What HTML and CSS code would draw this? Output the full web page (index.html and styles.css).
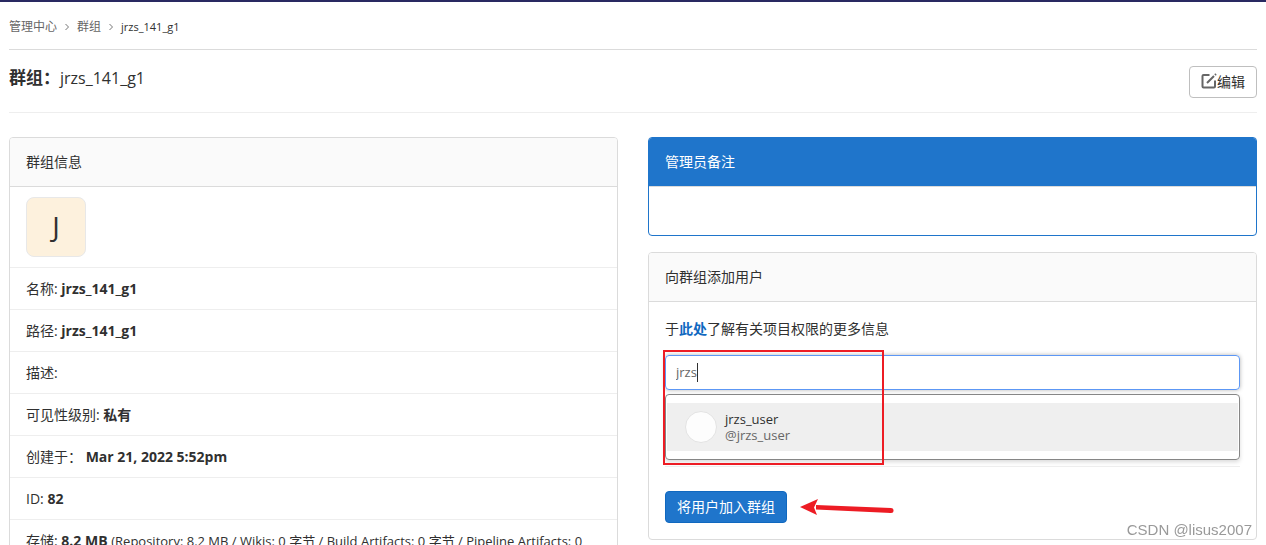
FILE: index.html
```html
<!DOCTYPE html>
<html lang="zh-CN">
<head>
<meta charset="utf-8">
<title>jrzs_141_g1 · 群组</title>
<link rel="stylesheet" href="styles.css">
</head>
<body>
<main class="page">
  <nav class="breadcrumbs" aria-label="Breadcrumbs">
    <a href="#">管理中心</a>
    <svg class="chevron" viewBox="0 0 8 8"><path d="M2.5 1 5.5 4 2.5 7"/></svg>
    <a href="#">群组</a>
    <svg class="chevron" viewBox="0 0 8 8"><path d="M2.5 1 5.5 4 2.5 7"/></svg>
    <a href="#" class="current">jrzs_141_g1</a>
  </nav>
  <header class="page-title">
    <h1>群组：<span class="group-name">jrzs_141_g1</span></h1>
    <button type="button" class="btn btn-default"><svg class="edit-icon" viewBox="0 0 16 16"><path d="M8.5 2H2.6Q1.500 2 1.500 3.100V13.400Q1.500 14.500 2.600 14.500H12.900Q14 14.500 14 13.400V7.500"/><path d="M6 10 13 3M14 2 15 1"/></svg>编辑</button>
  </header>
  <div class="columns">
    <section class="card">
      <h2 class="card-header">群组信息</h2>
      <ul class="info-list">
        <li><div class="group-avatar">J</div></li>
        <li>名称: <strong>jrzs_141_g1</strong></li>
        <li>路径: <strong>jrzs_141_g1</strong></li>
        <li>描述:</li>
        <li>可见性级别: <strong>私有</strong></li>
        <li>创建于： <strong>Mar 21, 2022 5:52pm</strong></li>
        <li>ID: <strong>82</strong></li>
        <li>存储: <strong>8.2 MB</strong> <span class="storage">(Repository: 8.2 MB / Wikis: 0 字节 / Build Artifacts: 0 字节 / Pipeline Artifacts: 0</span></li>
      </ul>
    </section>
    <div class="side">
      <section class="card card-primary">
        <h2 class="card-header">管理员备注</h2>
        <div class="note-body"></div>
      </section>
      <section class="card">
        <h2 class="card-header">向群组添加用户</h2>
        <form class="card-body">
          <p class="help">于<a href="#">此处</a>了解有关项目权限的更多信息</p>
          <div class="user-picker">
            <div class="search">
              <input type="text" value="jrzs" size="2" aria-label="搜索用户">
              <span class="caret"></span>
            </div>
            <ul class="results">
              <li>
                <span class="user-avatar"></span>
                <span class="user"><span class="name">jrzs_user</span><span class="handle">@jrzs_user</span></span>
              </li>
            </ul>
            <span class="highlight"></span>
          </div>
          <hr>
          <div class="actions">
            <button type="button" class="btn btn-primary">将用户加入群组</button>
            <svg class="arrow" viewBox="0 0 94 20"><path d="M16 8 91 11V16L16 12.500Z"/><path d="M0 10 18 2 14 10.500 17 18Z"/><circle cx="91" cy="13.500" r="2.500"/></svg>
          </div>
        </form>
      </section>
    </div>
  </div>
</main>
<div class="watermark">CSDN @lisus2007</div>
</body>
</html>
```
FILE: styles.css
```css
* { box-sizing: border-box; }

body {
  margin: 0;
  height: 100vh;
  overflow: hidden;
  border-top: 2px solid #292961;
  background: #fff;
  color: #303030;
  font: 14px/21px "Open Sans", "Noto Sans CJK SC", sans-serif;
}

a { color: #1068bf; text-decoration: none; }
h1, h2, p, ul { margin: 0; padding: 0; }
ul { list-style: none; }

.page { padding: 0 9px; }

.breadcrumbs {
  display: flex;
  align-items: center;
  gap: 6px;
  height: 48px;
  padding-top: 2px;
  border-bottom: 1px solid #dbdbdb;
  font-size: 12px;
}
.breadcrumbs a { color: #666; }
.breadcrumbs .current { color: #303030; font-size: 11px; }
.chevron {
  width: 8px;
  height: 8px;
  fill: none;
  stroke: #777;
  stroke-width: 1;
}

.page-title {
  display: flex;
  justify-content: space-between;
  align-items: flex-start;
  padding: 16px 0 14px;
  border-bottom: 1px solid #eee;
}
.page-title h1 {
  font-size: 17px;
  line-height: 24px;
  font-weight: 600;
}
.group-name { font-size: 16px; font-weight: 500; }

.btn {
  display: inline-flex;
  align-items: center;
  justify-content: center;
  height: 32px;
  border: 1px solid #bfbfbf;
  border-radius: 4px;
  background: #fff;
  color: #303030;
  font: inherit;
  white-space: nowrap;
}
.btn-default { padding: 0 11px 2px; }
.btn-primary {
  padding: 0 11px 2px;
  border-color: #1068bf;
  background: #1f75cb;
  color: #fff;
}
.edit-icon {
  width: 16px;
  height: 16px;
  fill: none;
  stroke: #666;
  stroke-width: 2;
}

.columns {
  display: grid;
  grid-template-columns: 1fr 1fr;
  gap: 30px;
  align-items: start;
  margin-top: 24px;
}
.side { display: grid; gap: 16px; }

.card {
  border: 1px solid #dbdbdb;
  border-radius: 4px;
  background: #fff;
}
.card-header {
  padding: 16px;
  border-bottom: 1px solid #dbdbdb;
  border-radius: 3px 3px 0 0;
  background: #fafafa;
  font-size: 14px;
  line-height: 16px;
  font-weight: 400;
}
.card-primary { border-color: #1f75cb; }
.card-primary .card-header { background: #1f75cb; color: #fff; }
.note-body { height: 48px; }

.info-list li {
  padding: 10px 16px;
  border-bottom: 1px solid #eee;
}
.storage { font-size: 13px; }
.group-avatar {
  display: flex;
  align-items: center;
  justify-content: center;
  width: 60px;
  height: 60px;
  padding-bottom: 2px;
  border: 1px solid #e8e8e8;
  border-radius: 8px;
  background: #fdf1dd;
  font-size: 28px;
}

.card-body { padding: 16px; }
.help { margin-bottom: 16px; }
.help a { font-weight: 700; }

.user-picker { position: relative; }
.search {
  display: flex;
  align-items: center;
  height: 35px;
  padding: 0 10px;
  border: 1px solid #5c97f5;
  border-radius: 4px;
  box-shadow: 0 0 4px rgba(0, 0, 0, .3);
}
.search input {
  width: 21px;
  padding: 0;
  border: 0;
  outline: 0;
  background: none;
  color: #666;
  font: inherit;
  font-size: 13px;
}
.caret { width: 1px; height: 19px; background: #303030; }

.results {
  margin-top: 4px;
  padding: 8px 1px;
  border: 1px solid #868686;
  border-radius: 4px;
  box-shadow: 0 2px 4px rgba(0, 0, 0, .15);
}
.results li {
  display: flex;
  align-items: center;
  gap: 8px;
  height: 48px;
  padding: 0 18px;
  background: #efefef;
}
.user-avatar {
  width: 32px;
  height: 32px;
  border: 1px solid #e3e3e3;
  border-radius: 50%;
  background: #fdfdfd;
}
.user { display: grid; font-size: 13px; line-height: 16px; }
.handle { color: #666; }

.highlight {
  position: absolute;
  top: -5px;
  bottom: -5px;
  left: -2px;
  width: 221px;
  border: 2px solid #ed1c24;
}

hr {
  margin: 6px 0 24px;
  border: 0;
  border-top: 1px solid #eee;
}
.actions { display: flex; align-items: center; gap: 13px; }
.arrow { width: 94px; height: 20px; fill: #ed1c24; }

.watermark {
  position: fixed;
  right: 14px;
  bottom: 5px;
  color: #999;
  font: 15px/20px "Liberation Sans", Arial, sans-serif;
}
```
